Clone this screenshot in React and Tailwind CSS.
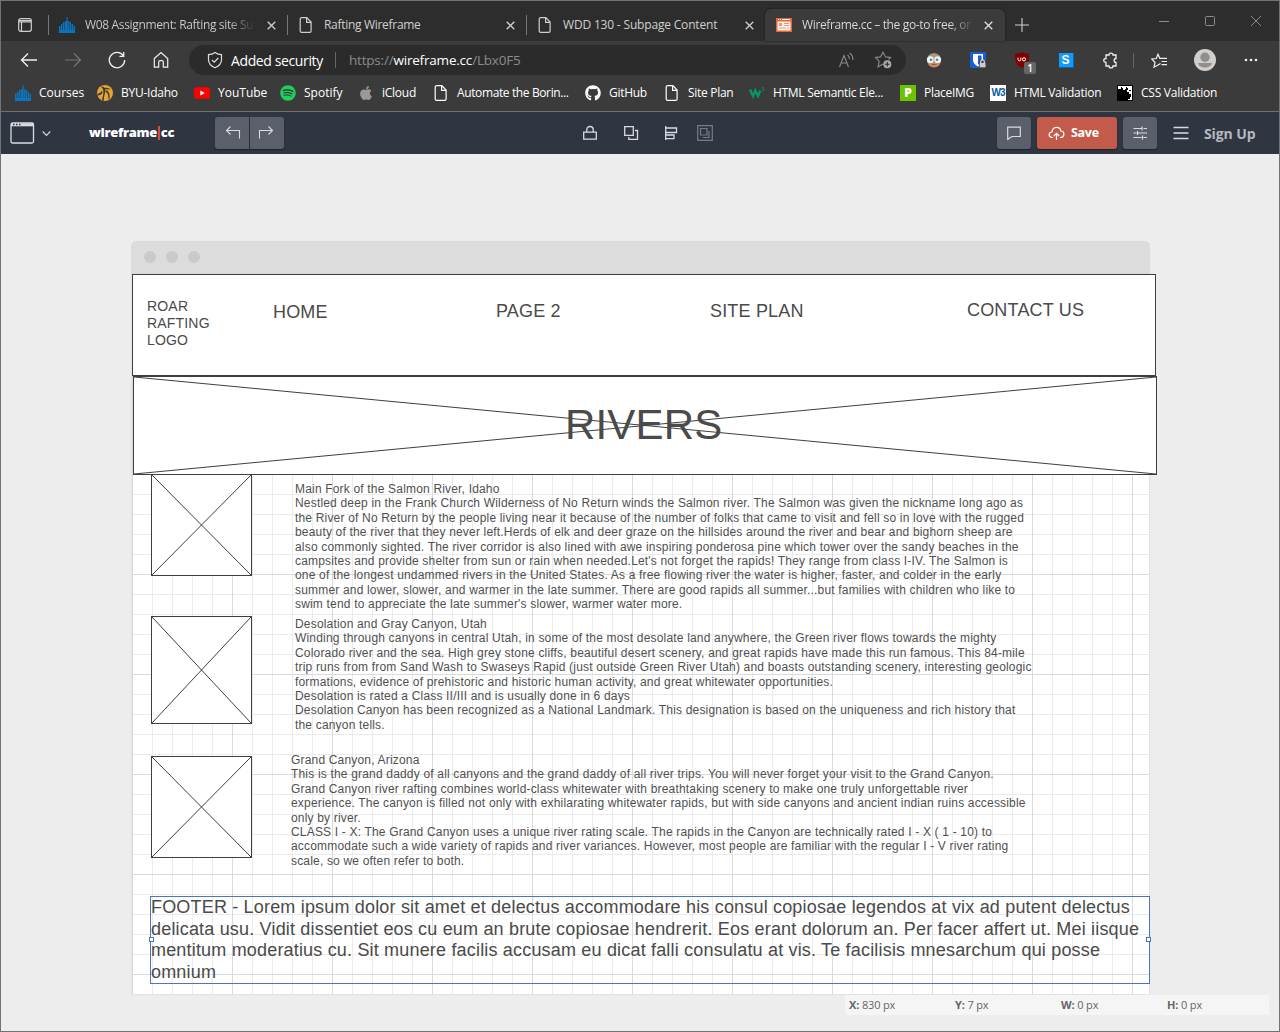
import React from "react";
import { FaApple, FaGithub, FaSpotify } from "react-icons/fa";

const Svg = ({ s = 18, vb = 18, className = "", sw = 1.1, children }) => (
  <svg width={s} height={s} viewBox={`0 0 ${vb} ${vb}`} fill="none" stroke="currentColor" strokeWidth={sw} className={`shrink-0 ${className}`}>
    {children}
  </svg>
);

const Organ = () => (
  <Svg s={16} vb={16}>
    <path fill="#0b74bf" stroke="none" d="M0 9h1.500v7H0zM2 7h1.500v9H2zM4 5h1.500v11H4zM6 4h1.500v12H6zM7.500 0h1.200v16H7.500zM9 4h1.200v12H9zM10.700 5h1.300v11h-1.300zM12.500 7H14v9h-1.500zM14.500 9H16v7h-1.500zM0 13h16v3H0z" />
  </Svg>
);
const Page = () => (
  <Svg s={16} vb={16} sw={1.2}>
    <path d="M3.6.7h5.2l4.3 4.4v8.8c0 .8-.5 1.4-1.4 1.4H3.6c-.8 0-1.4-.5-1.4-1.4V2.1C2.200 1.300 2.800.7 3.600.7zM8.600.9v4.400h4.300" />
  </Svg>
);
const YouTube = () => (
  <Svg s={16} vb={16}>
    <rect y="2.300" width="16" height="11.400" rx="2.800" fill="#f00" stroke="none" />
    <path d="M6.300 5.500v5L10.800 8z" fill="#fff" stroke="none" />
  </Svg>
);
const Byu = () => (
  <Svg s={16} vb={16}>
    <g stroke="none">
      <circle cx="8" cy="8" r="8" fill="#e5a52f" />
      <path fill="#3b3b3b" d="M4 1.500C7 1.500 9 3 8.500 6 8 9 7 10 6.800 15.800L5 15.300C6 10 7 8 6 4.500 5.500 3 4.500 2.500 4 1.500zM9.500 5c3 2 3.500 5 3 9l-1 .6C11.500 10 11 8.500 9 7zM.5 9c2-1 3.500-1.500 4.500-3.500L5.500 8C4.500 9.500 2.500 10 .6 11zM7.500 3C10 2 12 3.500 13.500 4L12 4.500 8.500 4z" />
    </g>
  </Svg>
);
const W3s = () => (
  <Svg s={16} vb={16} className="text-[#059862]" sw={2.4}>
    <path d="M1 4.500l3 6.500 2.300-5.500L9 11l2.300-5.500" />
    <path d="M12.700 2.800h2l-.9 1.400c.9 0 1.200.5 1 1.100-.3.8-1.300.8-1.900.3" strokeWidth=".8" />
  </Svg>
);
const Css = () => (
  <Svg s={16} vb={16}>
    <g stroke="none">
      <path d="M0 0h16v16H0z" fill="#000" />
      <path d="M1 1h14v14h-4v-1h2v-2h1V9h-2V7h-2V5h1V3h-1V2H9v2H8v1H6V3H5V2H4v2H1z" fill="#fff" />
      <path d="M9 9h3v3H9zM12 5h2v1h-2z" fill="#000" />
    </g>
  </Svg>
);
const Close = () => (
  <Svg s={9} vb={9} sw={1.3}><path d="M.7.7l7.600 7.600M8.300.7L.7 8.300" /></Svg>
);
const WireIcon = () => (
  <Svg s={16} vb={16}>
    <g stroke="none">
      <path d="M0 1h16v14H0z" fill="#e2673a" />
      <path d="M1.500 4.500h13v9h-13z" fill="#fff3ec" />
      <path d="M3 6h3v3H3zM8 6h5v1H8zM8 8h5v1H8zM3 10.500h7v1H3zM11 10.500h2v1h-2z" fill="#ed9670" />
      <path d="M2 2h1v1H2zM4 2h1v1H4zM6 2h8v1H6z" fill="#fff" />
    </g>
  </Svg>
);

const tabs = [
  { icon: <Organ />, title: "W08 Assignment: Rafting site Su", fade: true, cls: "tracking-[-0.34px]" },
  { icon: <Page />, title: "Rafting Wireframe", cls: "tracking-[-0.3px]" },
  { icon: <Page />, title: "WDD 130 - Subpage Content", cls: "tracking-[-0.18px]" },
];

function TabStrip() {
  return (
    <div className="flex h-10 shrink-0 bg-[#2d2d2d] text-[#cfcfcf]">
      <div className="flex w-[47px] items-center pl-[17px] pt-2">
        <Svg s={14} vb={14} sw={1.2}><rect x=".7" y=".7" width="12.600" height="12.600" rx="2" /><path d="M1 2.500h12M1 3.800h12M3.500 4v9" /></Svg>
      </div>
      {tabs.map((t) => (
        <div key={t.title} className="flex w-[239px] shrink-0 items-center pt-2">
          <div className="h-5 w-px bg-[#777]" />
          <div className="ml-[10px] flex w-[220px] items-center">
            {t.icon}
            <div className={`ml-[10px] w-[175px] whitespace-nowrap text-[12px] leading-5 ${t.cls}`}>
              <span className={t.fade ? "bg-linear-to-r from-[#cfcfcf] from-85% to-[#3a3a3a] bg-clip-text text-transparent" : ""}>{t.title}</span>
            </div>
            <div className="ml-[7px]"><Close /></div>
          </div>
        </div>
      ))}
      <div className="flex w-[240px] shrink-0 items-center self-end rounded-t-[6px] bg-[#3b3b3b] pl-[11px] h-8 text-[#dedede] shadow-[0_0_2px_#151515]">
        <WireIcon />
        <div className="ml-[10px] w-[173px] whitespace-nowrap text-[12px] leading-5 tracking-[-0.36px]">
          <span className="bg-linear-to-r from-[#dedede] from-87% to-[#555] bg-clip-text text-transparent">Wireframe.cc – the go-to free, or</span>
        </div>
        <div className="ml-[9px]"><Close /></div>
      </div>
      <div className="flex items-center pl-[10px] pt-2"><Svg s={14} vb={14}><path d="M7 0v14M0 7h14" /></Svg></div>
      <div className="ml-auto flex items-center gap-9 pr-[18px] text-[#8c8c8c]">
        <Svg s={10} vb={10} sw={1}><path d="M0 5.500h10" /></Svg>
        <Svg s={10} vb={10} sw={1}><rect x=".5" y=".5" width="9" height="9" rx="1" /></Svg>
        <Svg s={10} vb={10} sw={1}><path d="M0 0l10 10M10 0L0 10" /></Svg>
      </div>
    </div>
  );
}

function AddressRow() {
  return (
    <div className="flex h-[38px] shrink-0 items-center text-[#f0f0f0]">
      <div className="flex w-[188px] items-center pl-[19px]">
        <Svg s={18}><path d="M17 9H1.500M8 2.500L1.500 9 8 15.500" strokeWidth="1.300" /></Svg>
        <Svg s={18} className="ml-[26px] text-[#777]"><path d="M1 9h15.500M10 2.500L16.500 9 10 15.500" /></Svg>
        <Svg s={18} className="ml-[26px]"><path d="M15.200 4.500A7.700 7.700 0 1 0 16.700 9M15.700 1v4.300h-4.300" strokeWidth="1.300" /></Svg>
        <Svg s={18} className="ml-[26px]"><path d="M2.300 7.500L9 1.500l6.700 6v8.700h-4.400v-5c0-1-.6-1.500-1.300-1.500H8c-.8 0-1.300.5-1.300 1.500v5H2.300z" strokeWidth="1.200" /></Svg>
      </div>
      <div className="flex h-[30px] w-[717px] items-center rounded-full bg-[#2b2b2b] pl-[17px] text-[14px]">
        <Svg s={18} className="text-[#ddd]"><path d="M9 1.500c2 1.500 4 2.200 6.500 2.200v5c0 3.500-2.500 6.300-6.500 8-4-1.700-6.500-4.500-6.500-8v-5C5 3.700 7 3 9 1.500zM6 9l2.200 2.200L12.300 7" strokeWidth="1.200" /></Svg>
        <span className="ml-[7px] w-[93px] whitespace-nowrap font-medium tracking-[-0.38px] text-white">Added security</span>
        <div className="ml-[11px] h-4 w-px bg-[#666]" />
        <span className="ml-[13px] whitespace-nowrap text-[13.500px] tracking-[-0.2px] text-[#8b8b8b]">https://<span className="text-white">wireframe.cc</span>/Lbx0F5</span>
        <div className="ml-auto flex items-center gap-[19px] pr-[14px] text-[#8b8b8b]">
          <Svg s={17} vb={17}><path d="M1.500 15L6 3.500 10.500 15M3 11h6M9.500 3c1.500 1 2 2.500 1.800 4M11.500 1c2.500 1.500 3.700 4 3.300 7" /></Svg>
          <Svg s={18}><path d="M9 13l-5 2.800 1.200-5.500L1.500 6.500l5-.6L9 1.200l2.500 4.700 5 .6-2 2" /><circle cx="13.300" cy="13.300" r="4" fill="#aaa" stroke="none" /><path d="M13.300 11v4.600M11 13.300h4.600" stroke="#2b2b2b" /></Svg>
        </div>
      </div>
      <div className="ml-[6px] flex items-center">
        <div className="flex w-11 justify-center">
          <Svg s={16} vb={16}><g stroke="none"><circle cx="8" cy="8.500" r="7" fill="#c98d66" /><path d="M2 5C3 0 13 0 14 5z" fill="#a8977c" /><circle cx="4.300" cy="7.700" r="3.400" fill="#e8f5fa" /><circle cx="11.700" cy="7.700" r="3.400" fill="#e8f5fa" /><circle cx="5" cy="7.700" r="1.300" fill="#4b8cad" /><circle cx="11" cy="7.700" r="1.300" fill="#4b8cad" /><path d="M5 13c2-1.500 4-1.500 6 0z" fill="#8a5640" /></g></Svg>
        </div>
        <div className="flex w-11 justify-center">
          <Svg s={16} vb={16}><g stroke="none"><rect width="16" height="16" rx="1" fill="#175ddc" /><path d="M3 2h10v6c0 3-2 5-5 6.500C5 13 3 11 3 8z" fill="#fff" /><path d="M8 3.500h3.600V8c0 2-1.600 3.600-3.600 4.700z" fill="#175ddc" /><rect x="9" y="8" width="7" height="8" fill="#444" /></g><path d="M10.700 11V9.500c0-2 3.600-2 3.600 0V11" stroke="#ddd" strokeWidth="1.200" /><path d="M9.700 11h5.800v4.300H9.700z" fill="#ccc" stroke="none" /></Svg>
        </div>
        <div className="relative flex w-11 justify-center">
          <Svg s={16} vb={16}><path d="M8 0c2 1.300 4.500 1.800 7 1.800C15 9 14.500 13 8 16 1.500 13 1 9 1 1.800 3.500 1.800 6 1.300 8 0z" fill="#800000" stroke="none" /><path d="M4 5.700v1.800c0 1.800 2.800 1.800 2.800 0V5.700" stroke="#fff" strokeWidth="1" /><circle cx="10" cy="7.300" r="1.600" stroke="#fff" strokeWidth="1" /></Svg>
          <span className="absolute left-[24px] top-[10px] flex h-3 w-[12px] items-center justify-center rounded-[2px] bg-[#666] text-[10px] font-semibold leading-none text-white">1</span>
        </div>
        <div className="flex w-11 justify-center">
          <span className="flex h-[15px] w-[15px] items-center justify-center border-b border-r border-[#0865ae] bg-[#139bf5] font-['Liberation_Sans'] text-[12px] font-bold leading-none text-white">S</span>
        </div>
        <div className="flex w-11 justify-center">
          <Svg s={17} vb={17}><path d="M4 3h3c0-2.600 4-2.600 4 0h3v3.500c-2.500 0-2.500 4 0 4V14h-3c0 2.600-4 2.600-4 0H4v-3.500c-3 0-3-4 0-4z" strokeWidth="1.300" /></Svg>
        </div>
        <div className="ml-px h-[15px] w-px bg-[#666]" />
        <Svg s={17} vb={17} className="ml-[17px]"><path d="M9.500 11.500L7 13l-4 2.200 1-4.700L.8 7l4.500-.5L7 2.300l1.800 4H16M10.500 9.500H16M10.500 12.700H16" strokeWidth="1.200" /></Svg>
        <Svg s={22} vb={22} className="ml-[26px]"><g stroke="none"><circle cx="11" cy="11" r="11" fill="#d1cecc" /><circle cx="11" cy="8.300" r="4.700" fill="#928e8c" /><path d="M4 14h14c-1 6-13 6-14 0z" fill="#928e8c" /></g></Svg>
        <Svg s={14} vb={14} className="ml-[28px]"><g fill="currentColor" stroke="none"><circle cx="2" cy="7" r="1.300" /><circle cx="7" cy="7" r="1.300" /><circle cx="12" cy="7" r="1.300" /></g></Svg>
      </div>
    </div>
  );
}

const bookmarks = [
  ["Courses", "w-[82px]", <Organ />],
  ["BYU-Idaho", "w-[97px] tracking-[-0.25px]", <Byu />],
  ["YouTube", "w-[86px]", <YouTube />],
  ["Spotify", "w-[78px]", <FaSpotify className="size-4 shrink-0 text-[#1ed05e]" />],
  ["iCloud", "w-[75px] tracking-[-0.25px]", <FaApple className="size-4 shrink-0 text-[#999]" />],
  ["Automate the Borin...", "w-[152px] tracking-[-0.38px]", <Page />],
  ["GitHub", "w-[79px] tracking-[-0.3px]", <FaGithub className="size-4 shrink-0" />],
  ["Site Plan", "w-[85px] tracking-[-0.3px]", <Page />],
  ["HTML Semantic Ele...", "w-[151px] tracking-[-0.3px]", <W3s />],
  ["PlaceIMG", "w-[90px] tracking-[-0.3px]", <span className="flex size-4 shrink-0 items-center justify-center bg-[#6cc200] text-[12px] font-extrabold leading-none">P</span>],
  ["HTML Validation", "w-[127px] tracking-[-0.28px]", <span className="flex size-4 shrink-0 items-center justify-center bg-white font-['Liberation_Sans'] text-[10px] font-bold leading-none tracking-[-1px] text-[#0a5a9c]">W3</span>],
  ["CSS Validation", "w-[110px] tracking-[-0.25px]", <Css />],
];

function Bookmarks() {
  return (
    <div className="flex h-[32px] shrink-0 pl-[14px] pb-1 text-[12px] text-white">
      {bookmarks.map(([name, w, icon]) => (
        <div key={name} className={`flex shrink-0 items-center gap-2 whitespace-nowrap ${w}`}>{icon}<span>{name}</span></div>
      ))}
    </div>
  );
}

const btn = "flex h-8 items-center justify-center bg-[#5a5f6a] shadow-[0_1px_1px_#1d2230]";

function AppBar() {
  return (
    <div className="flex h-[42px] shrink-0 items-center bg-[#303542] text-[#d9dbe0]">
      <div className="flex w-[214px] items-center pl-[9px]">
        <svg width="25" height="22" viewBox="0 0 25 22" fill="none" stroke="currentColor" strokeWidth="1.3"><rect x="1" y="1" width="22.500" height="20" rx="1.500" /><path d="M1 2.800h22.500" strokeWidth="3" /><path d="M3 2.500h1.500M6 2.500h1.500M9 2.500h1.500" stroke="#303542" strokeWidth="1.300" /></svg>
        <Svg s={9} vb={9} className="ml-[7px]"><path d="M.7 2.500l3.800 4 3.800-4" /></Svg>
        <div className="ml-[38px] flex items-center whitespace-nowrap text-[13px] font-extrabold tracking-[-0.33px] text-white">
          <span>wireframe</span>
          <span className="mx-px h-[14px] w-[2px] shrink-0 bg-[#d64c3e]" />
          <span>cc</span>
        </div>
      </div>
      <div className="flex gap-px">
        <div className={`${btn} w-[34px] rounded-l-[3px]`}><Svg s={16} vb={16} className="translate-x-px"><path d="M5.500 1.500L1.500 5.500l4 4M1.500 5.500h13v8" /></Svg></div>
        <div className={`${btn} w-[34px] rounded-r-[3px]`}><Svg s={16} vb={16} className="-translate-x-px"><path d="M10.500 1.500l4 4-4 4M14.500 5.500h-13v8" /></Svg></div>
      </div>
      <div className="ml-[298px] flex items-center">
        <Svg s={16} vb={16} sw={1.300}><path d="M1.700 7.200h12.600v7H1.700zM4.800 7V4.500c0-4 6.400-4 6.400 0V7" /></Svg>
        <Svg s={16} vb={16} className="ml-[25px]" sw={1.300}><path d="M1.700 1.700h8.600v8.600H1.700zM12 5.500h2.500v8.800H5.800V12" /></Svg>
        <Svg s={16} vb={16} className="ml-[25px]" sw={1.300}><path d="M1.700 1v14M2 3h10.500v4.500H2M2 10h8v3.700H2" /></Svg>
        <Svg s={16} vb={16} className="ml-[17px] text-[#777b84]" sw={1.200}><path d="M.7.7h14.600v14.600H.7zM3.500 3.500h6.500V10H3.500zM12 6v6.500H6" /></Svg>
      </div>
      <div className="ml-auto flex items-center gap-[6px] pr-[22px]">
        <div className={`${btn} w-[34px] rounded-[3px]`}><Svg s={16} vb={16} sw={1.200}><path d="M1.700 2.200h12.600v9.300H6L1.700 14.300z" /></Svg></div>
        <div className="flex h-8 w-20 items-center rounded-[3px] bg-[#c35a4a] pl-[11px] shadow-[0_1px_1px_#1d2230]">
          <Svg s={17} vb={17} sw={1.200} className="text-white"><path d="M5 12.500H4C0 12 .5 7 4 7c.5-6 8-6 8.800-1 4 0 4.200 6 .2 6.500h-1M8.500 15V8.500M5.800 11l2.700-2.700L11.200 11" /></Svg>
          <span className="ml-[6px] text-[12.500px] font-bold tracking-[-0.3px] text-white">Save</span>
        </div>
        <div className={`${btn} w-[34px] rounded-[3px]`}><Svg s={16} vb={16} sw={1.200}><path d="M1.500 3.500h8M11.500 3.500H15M1.500 8h3M6 8h9M1.500 12.500h8M11.500 12.500H15M10 1.500v4M5.500 6v4M10.500 10.500v4" /></Svg></div>
        <Svg s={16} vb={16} className="ml-[10px]" sw={1.300}><path d="M.5 2.500h15M.5 8h15M.5 13.500h15" /></Svg>
        <span className="ml-[9px] w-[53px] whitespace-nowrap text-[14px] font-bold tracking-[-0.1px] text-[#b5b8bf]">Sign Up</span>
      </div>
    </div>
  );
}

const Crossed = ({ className, children }) => (
  <div className={`absolute border border-[#3f3f3f] bg-white ${className}`}>
    <svg className="absolute inset-0 size-full text-[#3f3f3f]" viewBox="0 0 100 100" preserveAspectRatio="none" stroke="currentColor">
      <path d="M0 0L100 100M100 0L0 100" vectorEffect="non-scaling-stroke" strokeWidth="1" />
    </svg>
    {children}
  </div>
);

const paragraphs = [
  ["left-[163px] top-[208px]", [
    "Main Fork of the Salmon River, Idaho",
    "Nestled deep in the Frank Church Wilderness of No Return winds the Salmon river. The Salmon was given the nickname long ago as",
    "the River of No Return by the people living near it because of the number of folks that came to visit and fell so in love with the rugged",
    "beauty of the river that they never left.Herds of elk and deer graze on the hillsides around the river and bear and bighorn sheep are",
    "also commonly sighted. The river corridor is also lined with awe inspiring ponderosa pine which tower over the sandy beaches in the",
    "campsites and provide shelter from sun or rain when needed.Let's not forget the rapids! They range from class I-IV. The Salmon is",
    "one of the longest undammed rivers in the United States. As a free flowing river the water is higher, faster, and colder in the early",
    "summer and lower, slower, and warmer in the late summer. There are good rapids all summer...but families with children who like to",
    "swim tend to appreciate the late summer's slower, warmer water more.",
  ]],
  ["left-[163px] top-[343px]", [
    "Desolation and Gray Canyon, Utah",
    "Winding through canyons in central Utah, in some of the most desolate land anywhere, the Green river flows towards the mighty",
    "Colorado river and the sea. High grey stone cliffs, beautiful desert scenery, and great rapids have made this run famous. This 84-mile",
    "trip runs from from Sand Wash to Swaseys Rapid (just outside Green River Utah) and boasts outstanding scenery, interesting geologic",
    "formations, evidence of prehistoric and historic human activity, and great whitewater opportunities.",
    "Desolation is rated a Class II/III and is usually done in 6 days",
    "Desolation Canyon has been recognized as a National Landmark. This designation is based on the uniqueness and rich history that",
    "the canyon tells.",
  ]],
  ["left-[159px] top-[479px]", [
    "Grand Canyon, Arizona",
    "This is the grand daddy of all canyons and the grand daddy of all river trips. You will never forget your visit to the Grand Canyon.",
    "Grand Canyon river rafting combines world-class whitewater with breathtaking scenery to make one truly unforgettable river",
    "experience. The canyon is filled not only with exhilarating whitewater rapids, but with side canyons and ancient indian ruins accessible",
    "only by river.",
    "CLASS I - X: The Grand Canyon uses a unique river rating scale. The rapids in the Canyon are technically rated I - X ( 1 - 10) to",
    "accommodate such a wide variety of rapids and river variances. However, most people are familiar with the regular I - V river rating",
    "scale, so we often refer to both.",
  ]],
];

const footer = [
  "FOOTER - Lorem ipsum dolor sit amet et delectus accommodare his consul copiosae legendos at vix ad putent delectus",
  "delicata usu. Vidit dissentiet eos cu eum an brute copiosae hendrerit. Eos erant dolorum an. Per facer affert ut. Mei iisque",
  "mentitum moderatius cu. Sit munere facilis accusam eu dicat falli consulatu at vis. Te facilisis mnesarchum qui posse",
  "omnium",
];

function Canvas() {
  return (
    <div className="ml-[131px] mt-[87px] w-[1018px]">
      <div className="flex h-[33px] items-center gap-[10px] rounded-t-[5px] bg-[#dcdcdc] pb-px pl-[13px] -ml-px w-[1019px]">
        <i className="size-3 rounded-full bg-[#cacaca]" />
        <i className="size-3 rounded-full bg-[#cacaca]" />
        <i className="size-3 rounded-full bg-[#cacaca]" />
      </div>
      <div className="relative h-[720px] w-[1017px] whitespace-nowrap bg-white font-['Liberation_Sans',sans-serif] tracking-[0.18px] text-[#4a4a4a] shadow-[0_0_2px_#ccc] [background-image:linear-gradient(to_right,#dadada_1px,transparent_1px),linear-gradient(to_bottom,#dadada_1px,transparent_1px),linear-gradient(to_right,#ebebeb_1px,transparent_1px),linear-gradient(to_bottom,#ebebeb_1px,transparent_1px)] [background-size:100px_100px,100px_100px,20px_20px,20px_20px]">
        <div className="absolute left-0 top-0 h-[102px] w-[1024px] border border-[#3f3f3f] bg-white text-[18px] leading-[22px]">
          <div className="absolute left-[14px] top-[23px] text-[14px] leading-[17px]">ROAR<br />RAFTING<br />LOGO</div>
          <span className="absolute left-[140px] top-[26px]">HOME</span>
          <span className="absolute left-[363px] top-[25px]">PAGE 2</span>
          <span className="absolute left-[577px] top-[25px]">SITE PLAN</span>
          <span className="absolute left-[834px] top-[24px]">CONTACT US</span>
        </div>
        <Crossed className="left-px top-[102px] h-[99px] w-[1024px]">
          <span className="absolute left-[431px] top-[23px] text-[42px] leading-[50px]">RIVERS</span>
        </Crossed>
        <Crossed className="left-[19px] top-[200px] h-[102px] w-[101px]" />
        <Crossed className="left-[19px] top-[342px] h-[108px] w-[101px]" />
        <Crossed className="left-[19px] top-[482px] h-[102px] w-[101px]" />
        {paragraphs.map(([pos, lines]) => (
          <div key={pos} className={`absolute text-[12px] leading-[14.4px] text-[#505050] ${pos}`}>
            {lines.map((l) => <div key={l}>{l}</div>)}
          </div>
        ))}
        <div className="absolute left-[18px] top-[622px] h-[88px] w-[1000px] border border-[#4877bd] text-[18px] leading-[21.6px]">
          {footer.map((l) => <div key={l}>{l}</div>)}
          <i className="absolute -left-[2px] top-[40px] size-[5px] border border-[#4877bd] bg-white" />
          <i className="absolute -right-[2px] top-[40px] size-[5px] border border-[#4877bd] bg-white" />
        </div>
      </div>
    </div>
  );
}

export default function App() {
  return (
    <div className="relative flex h-[1032px] w-[1280px] flex-col overflow-hidden border border-[#737373] bg-[#3b3b3b] font-['Open_Sans',sans-serif]">
      <TabStrip />
      <AddressRow />
      <Bookmarks />
      <div className="h-px shrink-0 bg-[#707070]" />
      <AppBar />
      <main className="min-h-0 flex-1 bg-[#ededed]"><Canvas /></main>
      <div className="absolute left-[844px] top-[994px] flex h-5 w-[424px] items-center bg-[#f5f5f5] pl-1 text-[11px] tracking-[-0.15px] text-[#666]">
        {[["X:", "830 px"], ["Y:", "7 px"], ["W:", "0 px"], ["H:", "0 px"]].map(([k, v]) => (
          <span key={k} className="w-[106px] shrink-0 last:w-auto"><b>{k}</b> {v}</span>
        ))}
      </div>
    </div>
  );
}
